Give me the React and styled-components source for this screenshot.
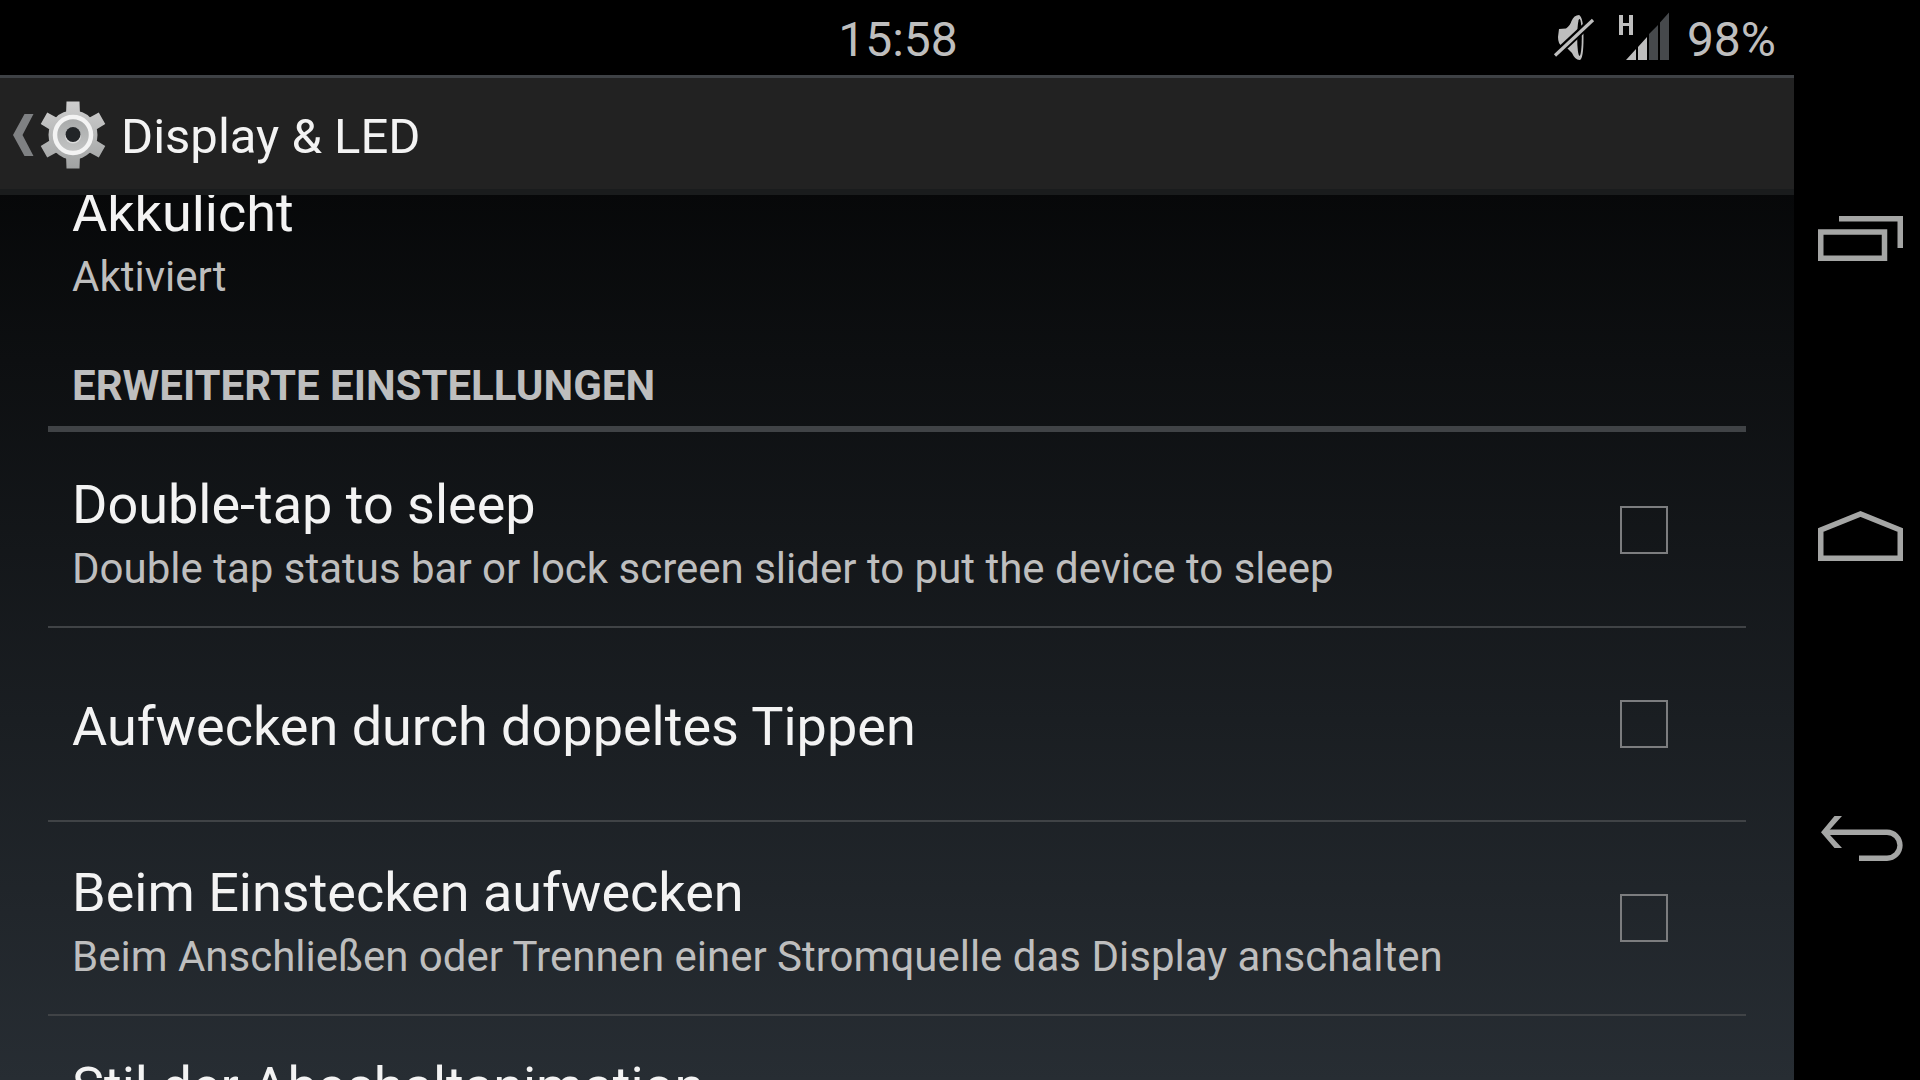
import React from 'react';
import styled, { createGlobalStyle } from 'styled-components';

const GlobalStyle = createGlobalStyle`
  * {
    box-sizing: border-box;
  }

  body {
    margin: 0;
    background: #000;
    color: #f3f3f3;
    font-family: Roboto, 'Noto Sans', sans-serif;
  }
`;

const Device = styled.div`
  display: flex;
  height: 100vh;
  overflow: hidden;
  background: #000;
`;

const Screen = styled.div`
  flex: 1;
  min-width: 0;
  display: flex;
  flex-direction: column;
  background: linear-gradient(#000, #272d33);
`;

const StatusBar = styled.header`
  display: grid;
  grid-template-columns: 1fr auto 1fr;
  align-items: center;
  flex: none;
  height: 75px;
  padding: 0 18px 0 20px;
  background: #000;
  color: #bebebe;
  font-size: 48px;
  line-height: 56px;
`;

const Clock = styled.time`
  grid-column: 2;
  padding-top: 4px;
`;

const StatusIcons = styled.div`
  display: flex;
  justify-content: flex-end;
  align-items: center;
`;

const StatusIcon = styled.svg`
  width: 66px;
  height: 75px;
  margin-right: 2px;
`;

const BatteryLevel = styled.span`
  padding: 4px 0 0 9px;
`;

const ActionBar = styled.div`
  display: flex;
  align-items: center;
  flex: none;
  height: 120px;
  padding: 2px 0 0 12px;
  background: #222;
  border-top: 3px solid #3e4145;
  border-bottom: 6px solid #1a1c1d;
`;

const UpButton = styled.button`
  display: flex;
  align-items: center;
  padding: 0;
  border: 0;
  background: none;
  color: inherit;
  font: inherit;
`;

const UpIcon = styled.svg`
  width: 96px;
  height: 72px;
`;

const ScreenTitle = styled.h1`
  margin: 0 0 0 13px;
  padding-top: 4px;
  font-size: 49px;
  font-weight: 400;
  line-height: 56px;
`;

const ListViewport = styled.main`
  flex: 1;
  min-height: 0;
  overflow: hidden;
  padding: 0 48px;
`;

/* list is scrolled, so the first row slides under the action bar */
const List = styled.div`
  margin-top: -53px;
`;

const Row = styled.label`
  display: flex;
  align-items: center;
  justify-content: space-between;
  height: 194px;
  padding: 0 78px 0 24px;
  border-bottom: 2px solid ${(props) => (props.$last ? 'transparent' : '#404346')};
`;

const RowText = styled.div`
  padding-top: 6px;
  white-space: nowrap;
`;

const RowTitle = styled.div`
  font-size: 54px;
  line-height: 72px;
`;

const RowSummary = styled.div`
  color: #bebebe;
  font-size: 42px;
  line-height: 56px;
`;

const Category = styled.h2`
  margin: 0 0 2px;
  padding: 25px 24px 15px;
  border-bottom: 6px solid #404346;
  color: #bebebe;
  font-size: 42px;
  font-weight: 700;
  line-height: 50px;
  text-transform: uppercase;
`;

const Checkbox = styled.input`
  appearance: none;
  flex: none;
  width: 48px;
  height: 48px;
  margin: 0;
  border: 2px solid #7c7d7f;

  &:checked {
    background: #33b5e5;
  }
`;

const NavBar = styled.nav`
  display: flex;
  flex-direction: column;
  flex: none;
  width: 126px;
  padding: 90px 0;
  background: #000;
`;

const NavButton = styled.button`
  flex: 1;
  display: flex;
  align-items: center;
  justify-content: center;
  padding: 0;
  border: 0;
  background: none;
  color: #a5a6a5;

  svg {
    width: 96px;
    height: 96px;
  }
`;

const Mute = () => (
  <StatusIcon viewBox="0 0 66 75" aria-label="Ton aus">
    <path
      d="M17 29L24 28.500Q28 26 29.500 21Q32 15 37 15Q41.500 17 41.500 37.500Q41.500 60 37.500 60Q33 60 30 53L26 49L20 46Q16 44 16 37Z"
      fill="#bebebe"
    />
    <ellipse cx="37.500" cy="37.500" rx="2.300" ry="18.500" fill="#000" />
    <path d="M11 57L54 17" stroke="#000" strokeWidth="7.500" />
    <path d="M13 55.500L51 20" stroke="#bebebe" strokeWidth="3.200" />
  </StatusIcon>
);

const Signal = () => (
  <StatusIcon viewBox="0 0 66 75" aria-label="Mobilfunk H">
    <path d="M9 15h4v8h6v-8h4v20h-4v-9h-6v9H9z" fill="#bebebe" />
    <path d="M16 60L26 49V60ZM28 47L37 37V60H28Z" fill="#bebebe" />
    <path d="M39 34L48 25V60H39ZM50 22.500L59 12.500V60H50Z" fill="#46494c" />
  </StatusIcon>
);

const TEETH = [0, 60, 120, 180, 240, 300];

const UpGear = () => (
  <UpIcon viewBox="0 0 96 72" aria-hidden="true">
    <defs>
      <linearGradient id="metal" x1="0" y1="2" x2="0" y2="70" gradientUnits="userSpaceOnUse">
        <stop offset="0" stopColor="#cfcfcf" />
        <stop offset="1" stopColor="#a0a2a2" />
      </linearGradient>
      <linearGradient id="hub" x1="0" y1="0" x2="0" y2="1">
        <stop offset="0" stopColor="#a6a8a8" />
        <stop offset="1" stopColor="#c4c5c5" />
      </linearGradient>
    </defs>
    <path d="M12.500 15H21.500L10.500 36L21.500 57H12.500L1 36Z" fill="#7f8183" />
    <path
      d={TEETH.map((angle) => {
        const turn = (x, y) => {
          const a = (angle * Math.PI) / 180;
          return `${61 + x * Math.cos(a) - y * Math.sin(a)} ${36 + x * Math.sin(a) + y * Math.cos(a)}`;
        };
        return `M${turn(-7, -20)}L${turn(-6.5, -33.5)}L${turn(6.5, -33.5)}L${turn(7, -20)}Z`;
      }).join('')}
      fill="url(#metal)"
    />
    <circle cx="61" cy="36" r="24.500" fill="url(#metal)" />
    <circle cx="61" cy="36" r="18" fill="url(#hub)" stroke="#f3f3f3" strokeWidth="4.500" />
    <circle cx="61" cy="36.500" r="8" fill="#dcdcdc" />
    <circle cx="61" cy="35.500" r="7.500" fill="#222528" />
  </UpIcon>
);

const RecentsIcon = () => (
  <svg viewBox="0 0 96 96" fill="none" stroke="currentColor" strokeWidth="5.500">
    <path d="M11.750 40H75.500V66.250H11.750Z" />
    <path d="M30 26.750H91.250V56" />
  </svg>
);

const HomeIcon = () => (
  <svg viewBox="0 0 96 96" fill="none" stroke="currentColor" strokeWidth="5.500">
    <path d="M11.750 38L51.500 22L91.250 38V66.250H11.750Z" />
  </svg>
);

const BackIcon = () => (
  <svg viewBox="0 0 96 96">
    <path d="M25.500 24H33L18.500 40.250L33 56H25.500L12 40.250Z" fill="currentColor" />
    <path d="M17 40.250H78A13 13 0 0 1 78 66.250H50" fill="none" stroke="currentColor" strokeWidth="5.300" />
  </svg>
);

const Preference = ({ title, summary, checkable, last }) => (
  <Row as={checkable ? 'label' : 'div'} $last={last}>
    <RowText>
      <RowTitle>{title}</RowTitle>
      {summary && <RowSummary>{summary}</RowSummary>}
    </RowText>
    {checkable && <Checkbox type="checkbox" />}
  </Row>
);

const App = () => {
  return (
    <Device>
      <GlobalStyle />
      <Screen>
        <StatusBar>
          <Clock>15:58</Clock>
          <StatusIcons>
            <Mute />
            <Signal />
            <BatteryLevel>98%</BatteryLevel>
          </StatusIcons>
        </StatusBar>
        <ActionBar>
          <UpButton aria-label="Nach oben">
            <UpGear />
          </UpButton>
          <ScreenTitle>Display &amp; LED</ScreenTitle>
        </ActionBar>
        <ListViewport>
          <List>
            <Preference title="Akkulicht" summary="Aktiviert" last />
            <Category>Erweiterte Einstellungen</Category>
            <Preference
              title="Double-tap to sleep"
              summary="Double tap status bar or lock screen slider to put the device to sleep"
              checkable
            />
            <Preference title="Aufwecken durch doppeltes Tippen" checkable />
            <Preference
              title="Beim Einstecken aufwecken"
              summary="Beim Anschließen oder Trennen einer Stromquelle das Display anschalten"
              checkable
            />
            <Preference title="Stil der Abschaltanimation" summary="Elektronenstrahl" />
          </List>
        </ListViewport>
      </Screen>
      <NavBar>
        <NavButton aria-label="Letzte Apps">
          <RecentsIcon />
        </NavButton>
        <NavButton aria-label="Startseite">
          <HomeIcon />
        </NavButton>
        <NavButton aria-label="Zurück">
          <BackIcon />
        </NavButton>
      </NavBar>
    </Device>
  );
};

export default App;
